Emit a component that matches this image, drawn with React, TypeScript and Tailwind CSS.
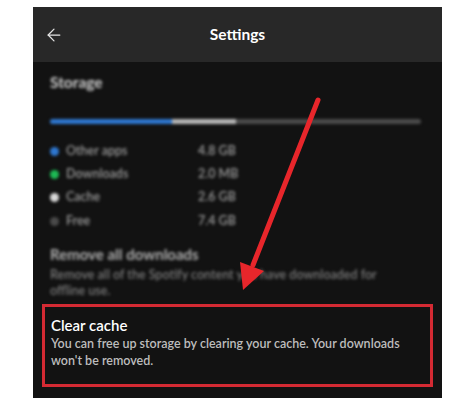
import { ArrowLeft } from 'lucide-react';

const legend = [
  { label: 'Other apps', value: '4.8 GB', dot: 'bg-[#2e77d0]' },
  { label: 'Downloads', value: '2.0 MB', dot: 'bg-[#1db954]' },
  { label: 'Cache', value: '2.6 GB', dot: 'bg-[#d9d9d9]' },
  { label: 'Free', value: '7.4 GB', dot: 'bg-[#4a4a4a]' },
];

export default function App() {
  return (
    <div className="w-[474px] h-[408px] bg-white pt-[7px] pl-[33px] font-['Lato','Open_Sans',sans-serif]">
      <div className="relative w-[409px] h-[391px] bg-[#121212] flex flex-col overflow-hidden">
        {/* Header */}
        <div className="h-[55px] bg-[#282828] flex items-center relative shrink-0">
          <ArrowLeft className="absolute left-[11px] w-[20px] h-[20px] text-[#e5e5e5]" strokeWidth={1.5} />
          <span className="w-full text-center text-white font-bold text-[15.5px]">Settings</span>
        </div>

        {/* Storage (blurred in the screenshot) */}
        <div className="px-[17px] pt-[9px] blur-[1.4px]">
          <div className="text-[#d0d0d0] font-bold text-[15.5px]">Storage</div>
          <div className="mt-[25px] mr-[4px] h-[5px] rounded-full bg-[#4b4b4b] flex overflow-hidden">
            <div className="w-[122px] bg-[#2e77d0]" />
            <div className="w-[64px] bg-[#b7b7b7]" />
          </div>
          <div className="mt-[19px] flex flex-col gap-[7.3px]">
            {legend.map((row) => (
              <div key={row.label} className="flex items-center h-[16px] text-[12.5px] font-semibold text-[#9a9a9a]">
                <span className={`w-[9px] h-[9px] rounded-full ${row.dot}`} />
                <span className="ml-[7px] w-[132px]">{row.label}</span>
                <span>{row.value}</span>
              </div>
            ))}
          </div>
          <div className="mt-[14px] text-[#b0b0b0] font-bold text-[15px]">Remove all downloads</div>
          <div className="mt-[1px] text-[12.5px] leading-[16px] font-semibold text-[#7a7a7a] w-[345px]">
            Remove all of the Spotify content you have downloaded for offline use.
          </div>
        </div>

        {/* Clear cache, boxed in red */}
        <div className="mt-[5px] mx-[9px] h-[83px] border-[3px] border-[#d42a33] px-[6px] pt-[7px]">
          <div className="text-white text-[15px] font-semibold">Clear cache</div>
          <div className="-mt-[1px] text-[12.5px] leading-[17px] text-[#bdbdbd] font-semibold">
            You can free up storage by clearing your cache. Your downloads won't be removed.
          </div>
        </div>

        {/* Red arrow overlay */}
        <svg className="absolute left-0 top-0" width="409" height="391" viewBox="0 0 409 391">
          <line x1="285" y1="93" x2="220" y2="258" stroke="#e8262b" strokeWidth="5" strokeLinecap="round" />
          <polygon points="210,283 231,264 207,255" fill="#e8262b" />
        </svg>
      </div>
    </div>
  );
}
